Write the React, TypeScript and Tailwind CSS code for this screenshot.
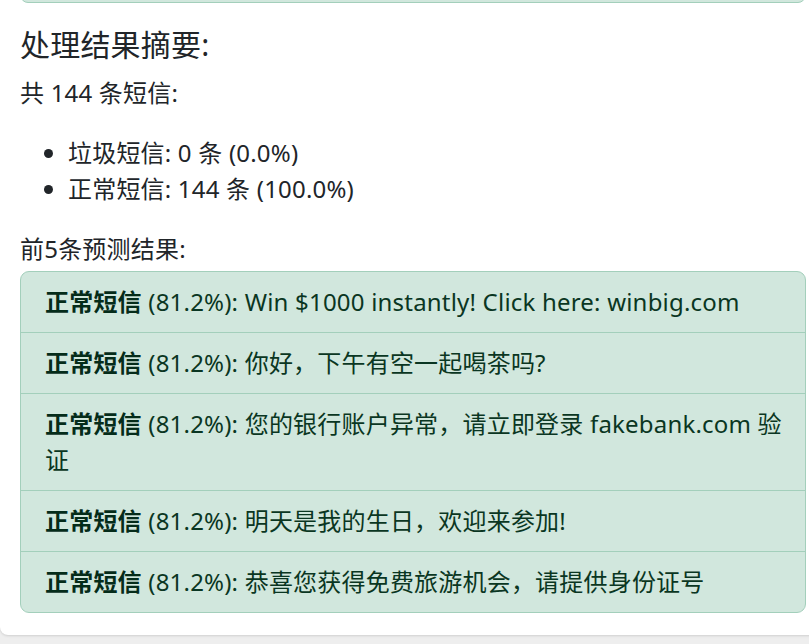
const rows = [
  "Win $1000 instantly! Click here: winbig.com",
  "你好，下午有空一起喝茶吗?",
  "您的银行账户异常，请立即登录 fakebank.com 验证",
  "明天是我的生日，欢迎来参加!",
  "恭喜您获得免费旅游机会，请提供身份证号",
];

export default function App() {
  return (
    <div
      className="w-full h-[644px] overflow-hidden bg-[#eeeeee] tracking-[0.2px]"
      style={{ fontFamily: '"Noto Sans", "Noto Sans CJK SC", sans-serif' }}
    >
      <div className="w-[830px] bg-white rounded-b-lg shadow-sm pl-5 pr-[24px] pb-[22px]">
        <div className="h-[40px] -mt-[37px] rounded-b-lg border border-[#a3cfbb] bg-[#d1e7dd] w-[786px]" />

        <h5 className="mt-[24px] mb-[12px] text-[30px] leading-[36px] text-[#212529]">
          处理结果摘要:
        </h5>
        <p className="mb-[24px] text-[24px] leading-[36px] text-[#212529]">
          共 144 条短信:
        </p>
        <ul className="mb-[24px] pl-[48px] list-disc text-[24px] leading-[36px] text-[#212529]">
          <li>垃圾短信: 0 条 (0.0%)</li>
          <li>正常短信: 144 条 (100.0%)</li>
        </ul>
        <div className="mb-[4px] text-[24px] leading-[36px] text-[#212529]">前5条预测结果:</div>

        <div className="w-[786px] rounded-[9px] border border-[#a3cfbb] bg-[#d1e7dd] text-[#0a3622] text-[24px] leading-[36px] overflow-hidden">
          {rows.map((r, i) => (
            <div
              key={i}
              className={`pl-[24px] pr-[18px] py-[12px] ${i > 0 ? "border-t border-[#a3cfbb]" : ""}`}
            >
              <strong className="font-bold text-[#052c1a]">正常短信</strong> (81.2%): {r}
            </div>
          ))}
        </div>
      </div>
    </div>
  );
}
